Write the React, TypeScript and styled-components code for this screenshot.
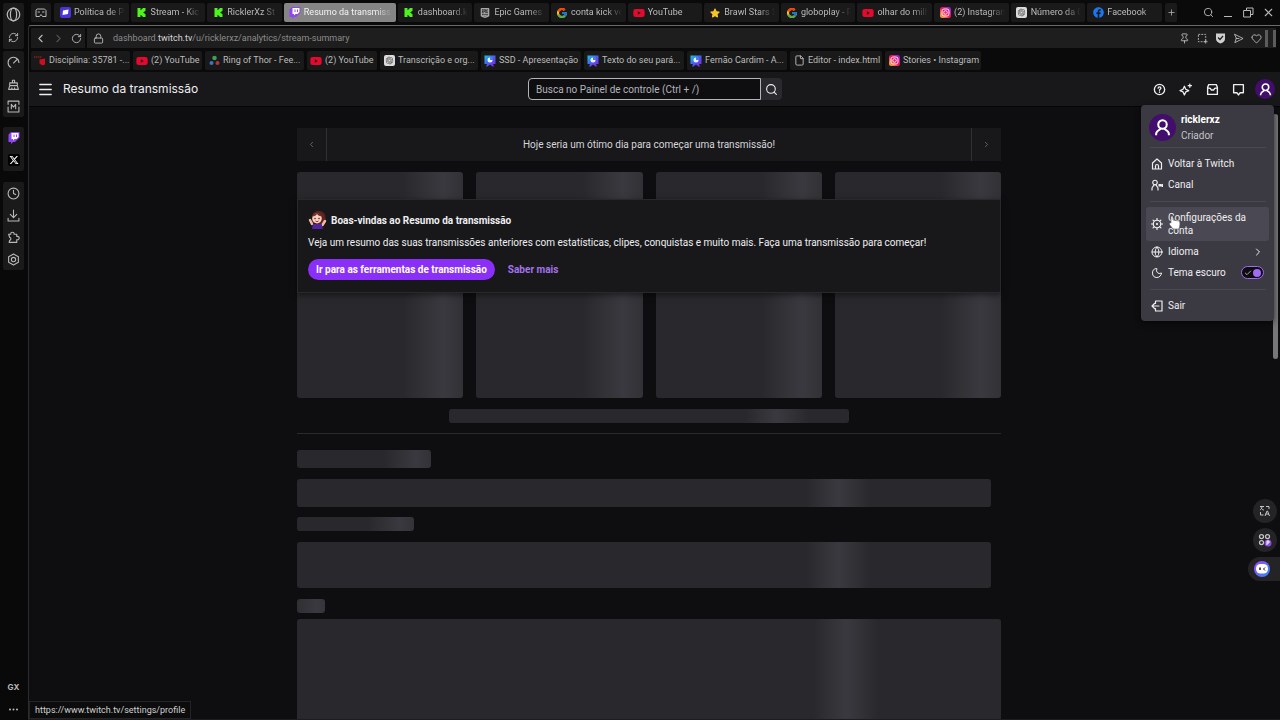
import React from "react";
import styled, { createGlobalStyle, css } from "styled-components";
import {
  RotateCw, RefreshCw, Lock, Search, ChevronLeft, ChevronRight, Moon, Globe, Clock,
  X, Plus, Heart, Pin, File, Check, Menu as MenuIcon,
} from "lucide-react";
import { FaYoutube, FaFacebook, FaStar } from "react-icons/fa";
import { FaXTwitter } from "react-icons/fa6";
import { FcGoogle } from "react-icons/fc";
import { SiKick, SiEpicgames } from "react-icons/si";
import { RiOpenaiFill } from "react-icons/ri";

const Global = createGlobalStyle`
  * { box-sizing: border-box; }
  body { margin: 0; background: #0a0a0a; color: #efeff1; font: 10px/13px Roboto, "Liberation Sans", sans-serif; }
  button, input { font: inherit; color: inherit; }
  button { border: 0; padding: 0; background: none; display: flex; align-items: center; justify-content: center; }
  a { color: inherit; text-decoration: none; }
  svg { display: block; flex: none; }
`;

const Browser = styled.div`
  display: flex;
  min-height: 100vh;
  overflow: hidden;
`;

const SideBar = styled.nav`
  flex: none;
  width: 28px;
  padding: 3px 4px 0 3px;
  display: flex;
  flex-direction: column;
  background: #090909;
`;

const SideGroup = styled.div<{ $after: number; $bare?: boolean }>`
  display: flex;
  flex-direction: column;
  margin-bottom: ${(p) => p.$after}px;
  background: ${(p) => (p.$bare ? "none" : "#1a1a1a")};
  border-radius: 2px;
`;

const SideButton = styled.button<{ $tall?: boolean }>`
  height: ${(p) => (p.$tall ? 23 : 22)}px;
  color: #b9b9b9;
  font: 700 8px/10px Inter, sans-serif;
`;

const DarkBadge = styled.span`
  padding: 1px;
  border-radius: 2px;
  background: #000;
`;

const Spring = styled.div`
  flex: 1;
`;

const Column = styled.div`
  flex: 1;
  min-width: 0;
  display: flex;
  flex-direction: column;
`;

const TabBar = styled.div`
  display: flex;
  align-items: center;
  gap: 3px;
  height: 25px;
  padding: 0 2px 0 3px;
`;

const Chip = styled.button<{ $w: number }>`
  width: ${(p) => p.$w}px;
  height: 19px;
  flex: none;
  background: #1a1a1a;
  border-radius: 2px;
  color: #b9b9b9;
`;

const Tabs = styled.div`
  flex: 1;
  min-width: 0;
  display: flex;
  gap: 2px;
`;

const Tab = styled.button<{ $active?: boolean }>`
  flex: ${(p) => (p.$active ? "0 0 112px" : "1 1 0")};
  min-width: 0;
  height: 19px;
  padding: 0 2px 0 5px;
  gap: 3px;
  justify-content: flex-start;
  border-radius: 2px;
  background: ${(p) => (p.$active ? "#858585" : "#1a1a1a")};
  color: ${(p) => (p.$active ? "#f4f4f4" : "#bcbcbc")};
  overflow: hidden;
`;

const IconSlot = styled.span`
  flex: none;
  display: flex;
  justify-content: center;
  width: 12px;
`;

const TabLabel = styled.span`
  flex: 1;
  min-width: 0;
  overflow: hidden;
  white-space: nowrap;
  text-align: left;
  font-size: 9px;
  mask-image: linear-gradient(90deg, #000 calc(100% - 18px), transparent calc(100% - 2px));
`;

const WindowControls = styled.div`
  display: flex;
  align-items: center;
  margin-left: 18px;
  color: #b9b9b9;
`;

const ControlButton = styled.button`
  width: 20px;
  height: 19px;
`;

const Frame = styled.div`
  flex: 1;
  display: flex;
  flex-direction: column;
  border: 1px solid #1d1d1f;
  border-top-color: #6a6a6a;
  border-left-color: #2c2c2e;
  border-right: 0;
  border-top-left-radius: 3px;
`;

const AddressRow = styled.div`
  display: flex;
  gap: 2px;
  height: 22px;
  padding: 2px 4px 0 2px;
`;

const NavButtons = styled.div`
  display: flex;
  align-items: center;
  background: #1a1a1a;
  color: #b9b9b9;
`;

const NavButton = styled.button<{ $dim?: boolean }>`
  width: 18px;
  height: 20px;
  opacity: ${(p) => (p.$dim ? 0.35 : 1)};
`;

const AddressBox = styled.div`
  flex: 1;
  display: flex;
  align-items: center;
  gap: 9px;
  padding-left: 6px;
  background: #1e1e1e;
  color: #8c8c8c;
  & > svg { color: #b9b9b9; }
`;

const AddressText = styled.span`
  flex: 1;
  font-size: 9px;
  b { font-weight: 400; color: #d6d6d6; }
`;

const AddressActions = styled.div`
  display: flex;
  align-items: center;
  color: #b9b9b9;
`;

const Grips = styled.span`
  display: flex;
  gap: 5px;
  i { width: 3px; height: 17px; background: #5c5c5c; }
`;

const Bookmarks = styled.nav`
  display: flex;
  gap: 3px;
  height: 24px;
  padding: 3px 0 2px 2px;
`;

const Bookmark = styled.a<{ $w: number }>`
  width: ${(p) => p.$w}px;
  flex: none;
  display: flex;
  align-items: center;
  gap: 3px;
  padding-left: 3px;
  background: #191919;
  border-radius: 2px;
  color: #bcbcbc;
  font-size: 9px;
  white-space: nowrap;
`;

const Page = styled.div`
  position: relative;
  flex: 1;
  display: flex;
  flex-direction: column;
  background: #0e0e10;
`;

const Header = styled.header`
  display: grid;
  grid-template-columns: 1fr auto 1fr;
  align-items: center;
  height: 35px;
  padding: 0 5px 0 6px;
  background: #18181b;
  border-bottom: 1px solid #050506;
`;

const Brand = styled.div`
  display: flex;
  align-items: center;
  gap: 8px;
`;

const PageTitle = styled.h1`
  margin: 0;
  font: 400 12px/16px Inter, sans-serif;
`;

const SearchForm = styled.form`
  display: flex;
  height: 22px;
`;

const SearchInput = styled.input`
  width: 233px;
  padding: 0 7px;
  background: #0e0e10;
  border: 1px solid #b4b4b8;
  border-radius: 4px 0 0 4px;
  outline: 0;
  &::placeholder { color: #b4b4ba; opacity: 1; }
`;

const SearchButton = styled.button`
  width: 21px;
  background: #2a2a2e;
  border-radius: 0 4px 4px 0;
`;

const HeaderActions = styled.div`
  justify-self: end;
  display: flex;
  justify-content: space-between;
  align-items: center;
  width: 126px;
`;

const HeaderButton = styled.button`
  width: 20px;
  height: 20px;
`;

const Avatar = styled.span<{ $size: number }>`
  display: flex;
  align-items: center;
  justify-content: center;
  flex: none;
  width: ${(p) => p.$size}px;
  height: ${(p) => p.$size}px;
  border-radius: 50%;
  background: #430d6e;
  color: #fff;
`;

const Scroller = styled.div`
  flex: 1;
  display: flex;
  padding-right: 11px;
`;

const Main = styled.main`
  display: flex;
  flex-direction: column;
  width: 704px;
  max-width: calc(100% - 40px);
  margin: 21px auto 0;
`;

const Notice = styled.section`
  display: flex;
  height: 33px;
  background: #18181b;
  margin-bottom: 11px;
`;

const NoticeText = styled.p`
  flex: 1;
  margin: 0;
  display: flex;
  align-items: center;
  justify-content: center;
  color: #d6d6da;
`;

const NoticeArrow = styled.button<{ $side: "left" | "right" }>`
  width: 30px;
  color: #77777c;
  ${(p) =>
    p.$side === "left"
      ? css`border-right: 1px solid #2f2f35;`
      : css`border-left: 1px solid #2f2f35;`}
`;

const Stage = styled.div`
  position: relative;
`;

const Cards = styled.div`
  display: grid;
  grid-template-columns: repeat(4, 1fr);
  gap: 13px;
`;

const shimmer = (at: number, spread: number) => css`
  background: linear-gradient(
    90deg,
    #29292d calc(${at}% - ${spread}px),
    #3a393f ${at}%,
    #29292d calc(${at}% + ${spread}px)
  );
`;

const Skeleton = styled.div<{ $w?: number; $h: number; $at: number; $spread?: number; $after?: number }>`
  width: ${(p) => (p.$w ? `${p.$w}px` : "100%")};
  max-width: 100%;
  height: ${(p) => p.$h}px;
  margin-bottom: ${(p) => p.$after ?? 0}px;
  border-radius: 3px;
  ${(p) => shimmer(p.$at, p.$spread ?? 32)}
`;

const LastSkeleton = styled(Skeleton)`
  flex: 1 0 auto;
  border-radius: 3px 3px 0 0;
`;

const Caption = styled.div`
  display: flex;
  justify-content: center;
  padding: 11px 0 10px;
  border-bottom: 1px solid #2a2a2d;
  margin-bottom: 16px;
`;

const Welcome = styled.section`
  position: absolute;
  inset: 27px 0 auto;
  min-height: 94px;
  padding: 9px 10px;
  background: #18181b;
  border: 1px solid #29292d;
  box-shadow: 0 2px 6px rgba(0, 0, 0, 0.5);
`;

const WelcomeTitle = styled.h2`
  display: flex;
  align-items: center;
  gap: 4px;
  height: 22px;
  margin: 0;
  font-size: 10px;
  font-weight: 700;
`;

const WelcomeText = styled.p`
  margin: 5px 0 10px;
`;

const WelcomeActions = styled.div`
  display: flex;
  align-items: center;
  gap: 13px;
`;

const PrimaryButton = styled.button`
  height: 21px;
  padding: 0 8px;
  border-radius: 11px;
  background: #8a2ff7;
  color: #fff;
  font-weight: 700;
`;

const MoreLink = styled.a`
  color: #a472ec;
  font-weight: 700;
`;

const ScrollThumb = styled.div`
  position: absolute;
  top: 42px;
  right: 2px;
  width: 5px;
  height: 245px;
  border-radius: 3px;
  background: #77777a;
`;

const AccountMenu = styled.div`
  position: absolute;
  top: 33px;
  right: 6px;
  width: 133px;
  padding: 5px;
  background: #3b3941;
  border-radius: 4px;
  box-shadow: 0 2px 6px rgba(0, 0, 0, 0.6);
`;

const Profile = styled.div`
  display: flex;
  align-items: center;
  gap: 5px;
  height: 31px;
  padding: 4px 0 0 3px;
`;

const ProfileText = styled.div`
  display: flex;
  flex-direction: column;
  line-height: 16px;
  color: #c4c4ca;
  strong { color: #fff; font-weight: 700; }
`;

const Divider = styled.hr`
  width: 116px;
  height: 1px;
  margin: 6px auto 5px;
  border: 0;
  background: #4a4851;
`;

const MenuItem = styled.a<{ $hover?: boolean }>`
  display: flex;
  align-items: center;
  gap: 5px;
  min-height: ${(p) => (p.$hover ? 34 : 21)}px;
  padding: 0 5px;
  border-radius: 3px;
  background: ${(p) => (p.$hover ? "#4a4852" : "none")};
`;

const MenuText = styled.span`
  flex: 1;
`;

const Toggle = styled.span`
  position: relative;
  display: flex;
  align-items: center;
  justify-content: space-between;
  width: 23px;
  height: 13px;
  padding: 0 2px;
  border: 1px solid #a06cf5;
  border-radius: 7px;
  background: #0e0e10;
  input { position: absolute; inset: 0; margin: 0; opacity: 0; }
  i { width: 8px; height: 8px; border-radius: 50%; background: #a06cf5; }
`;

const Pointer = styled.svg`
  position: absolute;
  top: 110px;
  left: 27px;
`;

const Floaters = styled.aside`
  position: absolute;
  top: 427px;
  right: 0;
  display: flex;
  flex-direction: column;
  align-items: flex-end;
  gap: 5px;
`;

const Floater = styled.button<{ $pill?: boolean }>`
  width: ${(p) => (p.$pill ? 32 : 24)}px;
  height: 24px;
  margin-right: ${(p) => (p.$pill ? 0 : 3)}px;
  padding-right: ${(p) => (p.$pill ? 4 : 0)}px;
  border-radius: ${(p) => (p.$pill ? "12px 0 0 12px" : "12px")};
  background: #242426;
`;

const StatusUrl = styled.output`
  position: absolute;
  left: 0;
  bottom: 0;
  padding: 2px 5px 1px 5px;
  border: 1px solid #242426;
  background: #0c0c0d;
  color: #d0d0d0;
  font-size: 9px;
`;

const line = { fill: "none", stroke: "currentColor", strokeWidth: 2, strokeLinejoin: "round" as const, strokeLinecap: "round" as const };

const OperaIcon = () => (
  <svg width="15" height="15" viewBox="0 0 24 24" {...line}>
    <circle cx="12" cy="12" r="10" /><ellipse cx="12" cy="12" rx="5" ry="10" />
  </svg>
);
const GaugeIcon = () => (
  <svg width="13" height="13" viewBox="0 0 24 24" {...line}>
    <path d="M7 21A10 10 0 1 1 22 12M12 13l7-7" />
  </svg>
);
const DownloadIcon = () => (
  <svg width="13" height="13" viewBox="0 0 24 24" {...line}>
    <path d="M12 2v14M6 10l6 6 6-6M2 17v5h20v-5" />
  </svg>
);
const ExtensionIcon = () => (
  <svg width="13" height="13" viewBox="0 0 24 24" {...line}>
    <path d="M3 6h4c-1-5 7-5 6 0h5v4c6-1 6 7 0 6v5H4l1-4c3 0 3-5 0-5z" />
  </svg>
);
const PersonIcon = ({ size }: { size: number }) => (
  <svg width={size} height={size} viewBox="0 0 20 20" fill="none" stroke="currentColor" strokeWidth="2.4">
    <circle cx="10" cy="6.500" r="5" /><path d="M2.500 19v-1.500c0-3 3-4.500 5.500-6M17.500 19v-1.500c0-3-3-4.500-5.500-6" />
  </svg>
);
const GamepadIcon = () => (
  <svg width="12" height="12" viewBox="0 0 24 24" {...line}>
    <path d="M5 4h14l3 3v12h-7l-3-4-3 4H2V7z" /><path d="M6 10h3M15 10h3" />
  </svg>
);
const BroomIcon = () => (
  <svg width="13" height="13" viewBox="0 0 24 24" {...line}>
    <path d="M10 9V4h4v5M5 9h14v5H5zM5 14l-2 7h18l-2-7M9 21v-3M14 21v-3" />
  </svg>
);
const ModsIcon = () => (
  <svg width="13" height="13" viewBox="0 0 24 24" {...line}>
    <path d="M2 8V2h20v6M22 13v9H2v-9M8 16V8l4 5 4-5v8" />
  </svg>
);
const HexIcon = () => (
  <svg width="13" height="13" viewBox="0 0 24 24" {...line}>
    <path d="M12 2l9 5v10l-9 5-9-5V7z" /><circle cx="12" cy="12" r="4" />
  </svg>
);
const DotsIcon = () => (
  <svg width="11" height="3" viewBox="0 0 11 3" fill="currentColor">
    <circle cx="2" cy="1.500" r="1" /><circle cx="5.500" cy="1.500" r="1" /><circle cx="9" cy="1.500" r="1" />
  </svg>
);
const MinimizeIcon = () => (
  <svg width="10" height="10" viewBox="0 0 10 10" fill="none" stroke="currentColor"><path d="M1 8.500h8" /></svg>
);
const RestoreIcon = () => (
  <svg width="11" height="11" viewBox="0 0 22 22" {...line}><path d="M2 7h13v13H2zM7 7V2h13v13h-5" /></svg>
);
const SnapshotIcon = () => (
  <svg width="11" height="11" viewBox="0 0 24 24" {...line} strokeLinecap="butt">
    <path d="M3 3h16v16H3z" strokeDasharray="4 2.500" /><path d="M19 15v8M15 19h8" />
  </svg>
);
const ShieldIcon = () => (
  <svg width="11" height="12" viewBox="0 0 22 24">
    <path d="M2 3h18v11c0 4-4 7-9 9-5-2-9-5-9-9z" fill="#d0d0d0" /><path d="M6 11l4 4 6-7" fill="none" stroke="#222" strokeWidth="2.500" />
  </svg>
);
const SendIcon = () => (
  <svg width="11" height="11" viewBox="0 0 24 24" {...line}><path d="M4 3l18 9-18 9 3-9zM7 12h6" /></svg>
);
const HelpIcon = () => (
  <svg width="13" height="13" viewBox="0 0 24 24" {...line} strokeWidth="2.500">
    <circle cx="12" cy="12" r="9.500" /><path d="M9.500 9.500c0-3 5-3 5 0 0 2-2.500 2-2.500 4M12 16.500v.5" />
  </svg>
);
const SparkIcon = () => (
  <svg width="13" height="13" viewBox="0 0 24 24" {...line} strokeWidth="2.300">
    <path d="M10 6l2.500 5.500L18 14l-5.500 2.500L10 22l-2.500-5.500L2 14l5.500-2.500zM20 2v6M17 5h6" />
  </svg>
);
const InboxIcon = () => (
  <svg width="13" height="13" viewBox="0 0 24 24" {...line} strokeWidth="2.500">
    <path d="M5 3h14l2 5v13H3V8zM3 9l5 1 2 3h4l2-3 5-1" />
  </svg>
);
const SpeechIcon = () => (
  <svg width="13" height="13" viewBox="0 0 24 24" {...line} strokeWidth="2.500">
    <path d="M3 3h18v15h-6l-3 4-3-4H3z" />
  </svg>
);
const HouseIcon = () => (
  <svg width="12" height="12" viewBox="0 0 24 24" {...line} strokeWidth="2.400">
    <path d="M3 10l9-8 9 8v12H3zM9 22v-6c0-4 6-4 6 0v6" />
  </svg>
);
const ChannelIcon = () => (
  <svg width="12" height="12" viewBox="0 0 24 24" {...line} strokeWidth="2.400">
    <circle cx="8" cy="7" r="4.500" /><path d="M2 22v-3c0-4 3-4 4-7M14 22v-3c0-4-3-4-4-7" /><path d="M16 11h4v3h-4zM20 13l3-2v4z" fill="currentColor" />
  </svg>
);
const CogIcon = () => (
  <svg width="12" height="12" viewBox="0 0 24 24" {...line} strokeWidth="2.400">
    <circle cx="12" cy="12" r="7.500" /><circle cx="12" cy="12" r="1" />
    <path d="M12 1v3M12 20v3M1 12h3M20 12h3M4.200 4.200l2.200 2.200M17.600 17.600l2.200 2.200M4.200 19.800l2.200-2.200M17.600 6.400l2.200-2.200" />
  </svg>
);
const ExitIcon = () => (
  <svg width="12" height="12" viewBox="0 0 24 24" {...line} strokeWidth="2.400">
    <path d="M9 7V2h13v20H9v-5M16 12H2M7 7l-5 5 5 5" />
  </svg>
);
const TwitchIcon = () => (
  <svg width="12" height="12" viewBox="0 0 24 24">
    <path d="M6 0L1 5v15h5v4l4-4h4l9-9V0z" fill="#8f45f5" /><path d="M7 2h14v8l-4 4h-4l-3 3v-3H7z" fill="#fff" />
    <path d="M12 5v5M17 5v5" stroke="#8f45f5" strokeWidth="2" />
  </svg>
);
const DiscordDoc = () => (
  <svg width="11" height="11" viewBox="0 0 22 22"><rect width="22" height="22" rx="4" fill="#4b35d8" /><path d="M6 7l11-2-1 9-11 2z" fill="#fff" /></svg>
);
const Campus = () => (
  <svg width="12" height="11" viewBox="0 0 24 22"><path d="M0 4h16" stroke="#7c1e24" strokeWidth="3" strokeDasharray="3 1" /><path d="M11 9l11-2v12l-5 2-6-4z" fill="#c90f22" /></svg>
);
const Rings = () => (
  <svg width="11" height="11" viewBox="0 0 22 22"><circle cx="11" cy="6" r="4.500" fill="#3f9f56" /><circle cx="5" cy="16" r="4" fill="#3a76c4" /><circle cx="17" cy="16" r="4" fill="#b0343c" /></svg>
);
const Slides = () => (
  <svg width="12" height="12" viewBox="0 0 24 24">
    <defs><linearGradient id="slides" x1="0" y1="0" x2="1" y2="1"><stop offset="0" stopColor="#16c7d8" /><stop offset=".5" stopColor="#4b5cf0" /><stop offset="1" stopColor="#8a1fe0" /></linearGradient></defs>
    <path d="M1 1h22v17h-5l2 5h-3l-5-4-5 4H4l2-5H1z" fill="url(#slides)" /><circle cx="12" cy="10" r="5" fill="#e8f2ff" /><path d="M12 10V4a6 6 0 0 1 6 6z" fill="#4b7cf0" />
  </svg>
);
const Insta = () => (
  <svg width="11" height="11" viewBox="0 0 22 22">
    <defs><linearGradient id="insta" x1="0" y1="1" x2="1" y2="0"><stop offset="0" stopColor="#ffc52e" /><stop offset=".5" stopColor="#f5125f" /><stop offset="1" stopColor="#8b20e8" /></linearGradient></defs>
    <rect width="22" height="22" rx="5" fill="url(#insta)" /><g fill="none" stroke="#fff" strokeWidth="1.800"><rect x="4" y="4" width="14" height="14" rx="4" /><circle cx="11" cy="11" r="3.500" /></g>
  </svg>
);
const GptBadge = styled.span`
  display: flex;
  padding: 1px;
  border-radius: 2px;
  background: #dcdcdc;
  color: #444;
`;
const Gpt = () => <GptBadge><RiOpenaiFill size={9} /></GptBadge>;
const Mascot = () => (
  <svg width="19" height="20" viewBox="0 0 38 40">
    <path d="M8 12C10 0 30-2 34 10c2 8 1 16-2 19L8 26z" fill="#5d2320" />
    <path d="M4 20l4 8M34 22l-5 8" stroke="#f0b9a8" strokeWidth="5" strokeLinecap="round" />
    <ellipse cx="18" cy="17" rx="9.500" ry="10" fill="#f6cfc0" />
    <path d="M9 13c4-8 14-9 20-1-6 1-9-1-11-4-2 3-5 5-9 5z" fill="#6f2b25" />
    <circle cx="14" cy="17" r="1.500" fill="#3a1a2a" /><circle cx="22" cy="17" r="1.500" fill="#3a1a2a" />
    <path d="M15 22q3 3 6 0" stroke="#b03040" strokeWidth="2" fill="none" />
    <path d="M10 28h17l3 10H8z" fill="#4f249c" />
  </svg>
);
const HandIcon = () => (
  <Pointer width="13" height="15" viewBox="0 0 13 15">
    <path d="M3 8V2c0-1.500 2-1.500 2 0v3l6 1c1.500.5 1 5 0 8H5L1.500 9.500C1 8 2.500 7.500 3 8z" fill="#fff" stroke="#55525c" strokeWidth=".6" />
  </Pointer>
);
const TranslateIcon = () => (
  <svg width="12" height="12" viewBox="0 0 24 24" fill="none" stroke="#c4c4c4" strokeWidth="2">
    <path d="M2 3h8M6 3c0 4-2 6-4 7M4 5c1 3 4 5 6 5M14 3h6v5M3 14v6h6M12 22l4-10h1l4 10M13 18h7" />
  </svg>
);
const AppsIcon = () => (
  <svg width="14" height="14" viewBox="0 0 28 28" fill="none" stroke="#c4c4c4" strokeWidth="2.500">
    <circle cx="7" cy="7" r="4" /><circle cx="19" cy="7" r="4" /><circle cx="7" cy="19" r="4" />
    <circle cx="20" cy="20" r="7" fill="#8a4be0" stroke="none" /><path d="M18 24v-8h4v4h-4" stroke="#fff" strokeWidth="2" />
  </svg>
);
const BotIcon = () => (
  <svg width="16" height="16" viewBox="0 0 32 32">
    <defs><linearGradient id="bot" x1="0" y1="0" x2="1" y2="1"><stop offset="0" stopColor="#a044ff" /><stop offset="1" stopColor="#2a8cf5" /></linearGradient></defs>
    <circle cx="16" cy="16" r="16" fill="url(#bot)" /><rect x="4" y="6" width="24" height="19" rx="9" fill="#fff" />
    <path d="M12 13v5" stroke="#15152a" strokeWidth="3" /><path d="M22 13l-3 3 3 3" stroke="#15152a" strokeWidth="2" fill="none" />
  </svg>
);

const kick = <SiKick size={9} color="#4cf51c" />;
const tube = <FaYoutube size={12} color="#e5092f" />;
const tabs: { icon: React.ReactNode; label: string; active?: boolean }[] = [
  { icon: <DiscordDoc />, label: "Política de Pr" },
  { icon: kick, label: "Stream - Kic" },
  { icon: kick, label: "RicklerXz St" },
  { icon: <TwitchIcon />, label: "Resumo da transmissã", active: true },
  { icon: kick, label: "dashboard.k" },
  { icon: <SiEpicgames size={10} color="#a8a8a8" />, label: "Epic Games" },
  { icon: <FcGoogle size={12} />, label: "conta kick ve" },
  { icon: tube, label: "YouTube" },
  { icon: <FaStar size={10} color="#f7c325" />, label: "Brawl Stars S" },
  { icon: <FcGoogle size={12} />, label: "globoplay - P" },
  { icon: tube, label: "olhar do milh" },
  { icon: <Insta />, label: "(2) Instagram" },
  { icon: <Gpt />, label: "Número da C" },
  { icon: <FaFacebook size={11} color="#1877f2" />, label: "Facebook" },
];

const bookmarks: { icon: React.ReactNode; label: string; w: number }[] = [
  { icon: <Campus />, label: "Disciplina: 35781 -...", w: 99 },
  { icon: tube, label: "(2) YouTube", w: 69 },
  { icon: <Rings />, label: "Ring of Thor - Fee...", w: 99 },
  { icon: tube, label: "(2) YouTube", w: 70 },
  { icon: <Gpt />, label: "Transcrição e org...", w: 98 },
  { icon: <Slides />, label: "SSD - Apresentação", w: 100 },
  { icon: <Slides />, label: "Texto do seu pará...", w: 100 },
  { icon: <Slides />, label: "Fernão Cardim - A...", w: 100 },
  { icon: <File size={11} />, label: "Editor - index.html", w: 92 },
  { icon: <Insta />, label: "Stories • Instagram", w: 96 },
];

export default function App() {
  return (
    <Browser>
      <Global />
      <SideBar>
        <SideGroup $after={2}>
          <SideButton $tall aria-label="Opera"><OperaIcon /></SideButton>
          <SideButton $tall aria-label="Sincronizar"><RefreshCw size={11} /></SideButton>
        </SideGroup>
        <SideGroup $after={10}>
          <SideButton aria-label="Desempenho"><GaugeIcon /></SideButton>
          <SideButton aria-label="Limpador"><BroomIcon /></SideButton>
          <SideButton aria-label="Mods"><ModsIcon /></SideButton>
        </SideGroup>
        <SideGroup $after={11}>
          <SideButton aria-label="Twitch"><TwitchIcon /></SideButton>
          <SideButton aria-label="X"><DarkBadge><FaXTwitter size={10} color="#fff" /></DarkBadge></SideButton>
        </SideGroup>
        <SideGroup $after={0}>
          <SideButton aria-label="Histórico"><Clock size={13} /></SideButton>
          <SideButton aria-label="Downloads"><DownloadIcon /></SideButton>
          <SideButton aria-label="Extensões"><ExtensionIcon /></SideButton>
          <SideButton aria-label="Configurações"><HexIcon /></SideButton>
        </SideGroup>
        <Spring />
        <SideGroup $after={0} $bare>
          <SideButton>GX</SideButton>
          <SideButton aria-label="Mais"><DotsIcon /></SideButton>
        </SideGroup>
      </SideBar>

      <Column>
        <TabBar>
          <Chip $w={20} aria-label="GX Corner"><GamepadIcon /></Chip>
          <Tabs>
            {tabs.map((t, i) => (
              <Tab key={i} $active={t.active}><IconSlot>{t.icon}</IconSlot><TabLabel>{t.label}</TabLabel></Tab>
            ))}
          </Tabs>
          <Chip $w={12} aria-label="Nova guia"><Plus size={9} /></Chip>
          <WindowControls>
            <ControlButton aria-label="Pesquisar guias"><Search size={11} /></ControlButton>
            <ControlButton aria-label="Minimizar"><MinimizeIcon /></ControlButton>
            <ControlButton aria-label="Restaurar"><RestoreIcon /></ControlButton>
            <ControlButton aria-label="Fechar"><X size={13} /></ControlButton>
          </WindowControls>
        </TabBar>

        <Frame>
          <AddressRow>
            <NavButtons>
              <NavButton aria-label="Voltar"><ChevronLeft size={13} /></NavButton>
              <NavButton aria-label="Avançar" $dim><ChevronRight size={13} /></NavButton>
              <NavButton aria-label="Recarregar"><RotateCw size={11} /></NavButton>
            </NavButtons>
            <AddressBox>
              <Lock size={11} />
              <AddressText>dashboard.<b>twitch.tv</b>/u/ricklerxz/analytics/stream-summary</AddressText>
              <AddressActions>
                <NavButton aria-label="Fixar"><Pin size={11} /></NavButton>
                <NavButton aria-label="Captura"><SnapshotIcon /></NavButton>
                <NavButton aria-label="Proteção"><ShieldIcon /></NavButton>
                <NavButton aria-label="Enviar"><SendIcon /></NavButton>
                <NavButton aria-label="Favoritar"><Heart size={11} /></NavButton>
                <Grips><i /><i /></Grips>
              </AddressActions>
            </AddressBox>
          </AddressRow>
          <Bookmarks>
            {bookmarks.map((b, i) => (
              <Bookmark key={i} href="#" $w={b.w}><IconSlot>{b.icon}</IconSlot>{b.label}</Bookmark>
            ))}
          </Bookmarks>

          <Page>
            <Header>
              <Brand>
                <HeaderButton aria-label="Menu"><MenuIcon size={17} /></HeaderButton>
                <PageTitle>Resumo da transmissão</PageTitle>
              </Brand>
              <SearchForm>
                <SearchInput aria-label="Busca" placeholder="Busca no Painel de controle (Ctrl + /)" />
                <SearchButton type="button" aria-label="Buscar"><Search size={13} /></SearchButton>
              </SearchForm>
              <HeaderActions>
                <HeaderButton aria-label="Ajuda"><HelpIcon /></HeaderButton>
                <HeaderButton aria-label="Novidades"><SparkIcon /></HeaderButton>
                <HeaderButton aria-label="Caixa de entrada"><InboxIcon /></HeaderButton>
                <HeaderButton aria-label="Mensagens"><SpeechIcon /></HeaderButton>
                <HeaderButton aria-label="Conta"><Avatar $size={20}><PersonIcon size={13} /></Avatar></HeaderButton>
              </HeaderActions>
            </Header>

            <Scroller>
              <Main>
                <Notice>
                  <NoticeArrow $side="left" aria-label="Anterior"><ChevronLeft size={9} /></NoticeArrow>
                  <NoticeText>Hoje seria um ótimo dia para começar uma transmissão!</NoticeText>
                  <NoticeArrow $side="right" aria-label="Próximo"><ChevronRight size={9} /></NoticeArrow>
                </Notice>
                <Stage>
                  <Cards>
                    {[0, 1, 2, 3].map((i) => <Skeleton key={i} $h={226} $at={88} $spread={40} />)}
                  </Cards>
                  <Welcome>
                    <WelcomeTitle><Mascot />Boas-vindas ao Resumo da transmissão</WelcomeTitle>
                    <WelcomeText>
                      Veja um resumo das suas transmissões anteriores com estatísticas, clipes, conquistas e muito mais. Faça uma transmissão para começar!
                    </WelcomeText>
                    <WelcomeActions>
                      <PrimaryButton>Ir para as ferramentas de transmissão</PrimaryButton>
                      <MoreLink href="#">Saber mais</MoreLink>
                    </WelcomeActions>
                  </Welcome>
                </Stage>
                <Caption><Skeleton $w={400} $h={14} $at={82} /></Caption>
                <Skeleton $w={134} $h={18} $at={89} $after={11} />
                <Skeleton $w={694} $h={28} $at={78} $after={10} />
                <Skeleton $w={117} $h={14} $at={88} $after={11} />
                <Skeleton $w={694} $h={46} $at={78} $after={11} />
                <Skeleton $w={28} $h={14} $at={70} $after={6} />
                <LastSkeleton $h={100} $at={78} />
              </Main>
            </Scroller>

            <ScrollThumb />
            <Floaters>
              <Floater aria-label="Traduzir"><TranslateIcon /></Floater>
              <Floater aria-label="Aplicativos"><AppsIcon /></Floater>
              <Floater $pill aria-label="Assistente"><BotIcon /></Floater>
            </Floaters>
            <AccountMenu>
              <Profile>
                <Avatar $size={27}><PersonIcon size={17} /></Avatar>
                <ProfileText><strong>ricklerxz</strong><span>Criador</span></ProfileText>
              </Profile>
              <Divider />
              <MenuItem href="#"><HouseIcon /><MenuText>Voltar à Twitch</MenuText></MenuItem>
              <MenuItem href="#"><ChannelIcon /><MenuText>Canal</MenuText></MenuItem>
              <Divider />
              <MenuItem href="#" $hover><CogIcon /><MenuText>Configurações da conta</MenuText></MenuItem>
              <MenuItem href="#"><Globe size={12} /><MenuText>Idioma</MenuText><ChevronRight size={12} /></MenuItem>
              <MenuItem as="label">
                <Moon size={12} /><MenuText>Tema escuro</MenuText>
                <Toggle><input type="checkbox" defaultChecked /><Check size={8} /><i /></Toggle>
              </MenuItem>
              <Divider />
              <MenuItem href="#"><ExitIcon /><MenuText>Sair</MenuText></MenuItem>
              <HandIcon />
            </AccountMenu>
            <StatusUrl>https://www.twitch.tv/settings/profile</StatusUrl>
          </Page>
        </Frame>
      </Column>
    </Browser>
  );
}
